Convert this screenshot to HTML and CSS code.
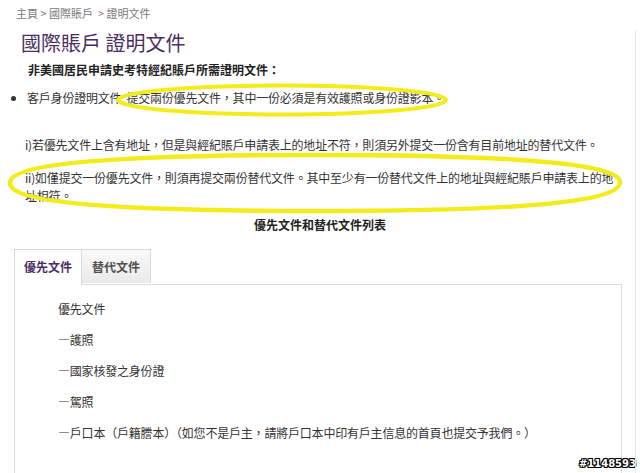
FILE: index.html
```html
<!DOCTYPE html>
<html lang="zh-Hant">
<head>
<meta charset="utf-8">
<title>國際賬戶 證明文件</title>
<link rel="stylesheet" href="styles.css">
</head>
<body>
<div class="page">
  <div class="breadcrumb">主頁 &gt; 國際賬戶 &nbsp;&gt; 證明文件</div>
  <h1 class="title">國際賬戶 證明文件</h1>
  <h2 class="subhead">非美國居民申請史考特經紀賬戶所需證明文件：</h2>
  <ul class="list">
    <li>客戶身份證明文件&nbsp; 提交兩份優先文件，其中一份必須是有效護照或身份證影本。</li>
  </ul>
  <p class="note note-i">i)若優先文件上含有地址，但是與經紀賬戶申請表上的地址不符，則須另外提交一份含有目前地址的替代文件。</p>
  <p class="note note-ii">ii)如僅提交一份優先文件，則須再提交兩份替代文件。其中至少有一份替代文件上的地址與經紀賬戶申請表上的地址相符。</p>
  <h3 class="listhead">優先文件和替代文件列表</h3>
  <div class="tabs">
    <div class="tabbar">
      <div class="tab tab-active">優先文件</div>
      <div class="tab">替代文件</div>
    </div>
    <div class="panel">
      <p class="item">優先文件</p>
      <p class="item">—護照</p>
      <p class="item">—國家核發之身份證</p>
      <p class="item">—駕照</p>
      <p class="item">—戶口本（戶籍謄本）（如您不是戶主，請將戶口本中印有戶主信息的首頁也提交予我們。）</p>
    </div>
  </div>
  <svg class="marks" width="640" height="473" viewBox="0 0 640 473" aria-hidden="true">
    <ellipse cx="282" cy="100" rx="164" ry="14.5" fill="none" stroke="#f3ec1c" stroke-width="4"/>
    <path d="M10,183 C10,166.2 85.5,155 314,155 C540,155 620,166.2 620,182 C620,199.8 540,211 314,211 C85.5,211 10,199.8 10,183 Z" fill="none" stroke="#f3ec1c" stroke-width="4.5"/>
  </svg>
  <div class="stamp">#1148593</div>
</div>
</body>
</html>
```

FILE: styles.css
```css
html, body {
  margin: 0;
  padding: 0;
  background: #ffffff;
}

body {
  font-family: "Noto Sans CJK TC", "Noto Sans", "Liberation Sans", sans-serif;
  font-size: 12px;
  color: #333333;
}

.page {
  position: relative;
  width: 640px;
  height: 473px;
  overflow: hidden;
}

.page::after {
  content: "";
  position: absolute;
  left: 635px;
  top: 30px;
  bottom: 0;
  width: 1px;
  background: #e6e6e6;
}

.breadcrumb {
  padding: 5px 0 0 16px;
  font-size: 11px;
  line-height: 16px;
  color: #7a7a7a;
}

.title {
  margin: 9px 0 0 21px;
  font-size: 20px;
  font-weight: normal;
  line-height: 26px;
  color: #4b2d5f;
}

.subhead {
  margin: 6px 0 0 28px;
  font-size: 12px;
  font-weight: bold;
  line-height: 16px;
  color: #222222;
}

.list {
  margin: 11px 0 0 0;
  padding: 0 0 0 27px;
  line-height: 18px;
  letter-spacing: -0.2px;
}

.list li {
  list-style: disc;
}

.note {
  margin: 0;
  padding-left: 25px;
  width: 600px;
  line-height: 18px;
  letter-spacing: -0.2px;
}

.note-i {
  margin-top: 29px;
}

.note-ii {
  margin-top: 15px;
}

.listhead {
  margin: 11px 0 0 0;
  text-align: center;
  font-size: 12px;
  font-weight: bold;
  line-height: 18px;
  color: #222222;
}

.tabs {
  margin: 15px 0 0 14px;
  width: 608px;
}

.tabbar {
  display: flex;
  align-items: flex-start;
}

.tab {
  box-sizing: border-box;
  height: 34px;
  padding: 0 9px;
  border: 1px solid #d9d9d9;
  border-bottom: none;
  background: linear-gradient(#fafafa, #e9e9e9);
  font-size: 12px;
  font-weight: bold;
  line-height: 33px;
  color: #505050;
}

.tab + .tab {
  border-left: none;
  padding: 0 10px;
}

.tab-active {
  height: 36px;
  margin-bottom: -1px;
  background: #ffffff;
  color: #4b2d5f;
  position: relative;
  z-index: 1;
}

.panel {
  box-sizing: border-box;
  height: 190px;
  border: 1px solid #dddddd;
  padding: 16px 0 0 43px;
  letter-spacing: -0.2px;
}

.item {
  margin: 0 0 15px 0;
  line-height: 16px;
}

.marks {
  position: absolute;
  left: 0;
  top: 0;
  pointer-events: none;
}

.stamp {
  position: absolute;
  right: 4px;
  bottom: 3px;
  font-family: "DejaVu Sans", sans-serif;
  font-size: 10px;
  font-weight: bold;
  line-height: 12px;
  color: #ffffff;
  text-shadow: 1px 0 0 #000, -1px 0 0 #000, 0 1px 0 #000, 0 -1px 0 #000,
    1px 1px 0 #000, -1px -1px 0 #000, 1px -1px 0 #000, -1px 1px 0 #000;
}
```
